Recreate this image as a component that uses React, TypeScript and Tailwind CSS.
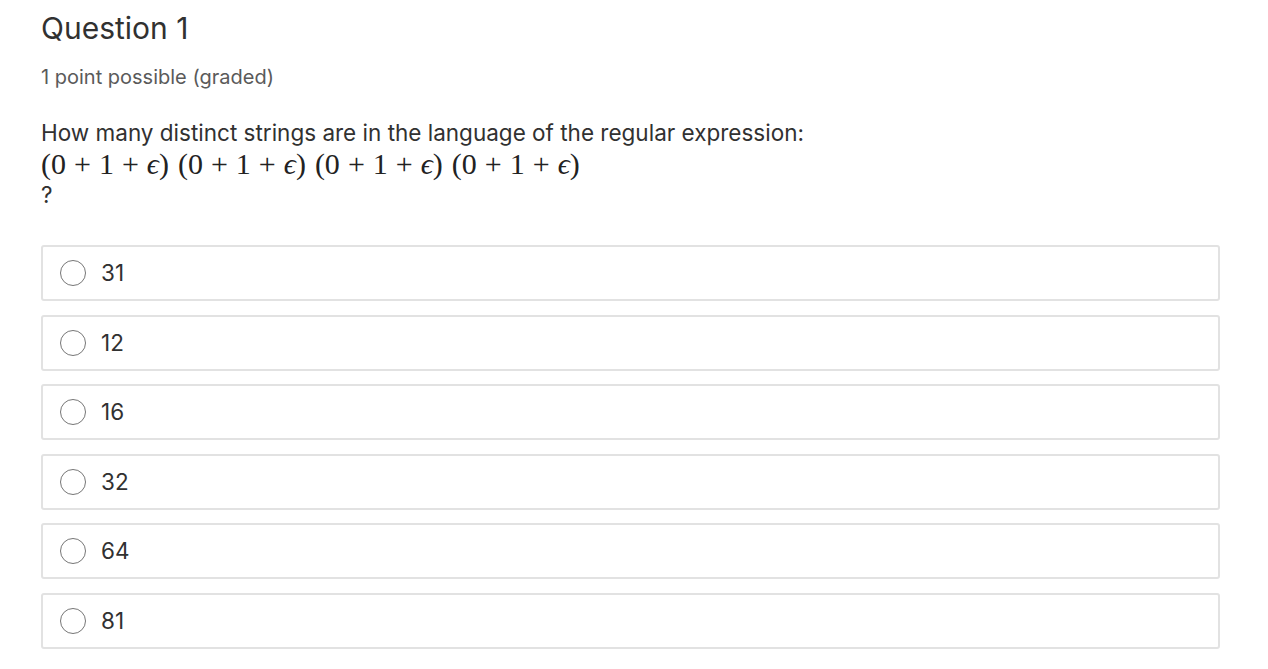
import React from 'react';

const options = ['31', '12', '16', '32', '64', '81'];

function MathGroup() {
  return (
    <span className="mr-[9px]">
      (0<span className="mx-[8px]">+</span>1<span className="mx-[8px]">+</span>
      <span className="italic">ϵ</span>)
    </span>
  );
}

export default function App() {
  return (
    <div className="min-h-screen bg-white px-[41px] pt-[10px] text-[#313131]" style={{ fontFamily: 'Inter, "Open Sans", sans-serif' }}>
      <h2 className="text-[30px] leading-[36px] text-[#313131]">Question 1</h2>
      <div className="mt-[18px] text-[20px] leading-[26px] text-[#5a5a5a]">1 point possible (graded)</div>
      <div className="mt-[29px] text-[22.5px] leading-[28px] text-[#313131]">
        How many distinct strings are in the language of the regular expression:
      </div>
      <div className="text-[30px] leading-[34px] text-[#222]" style={{ fontFamily: '"Liberation Serif", "DejaVu Serif", serif' }}>
        <MathGroup />
        <MathGroup />
        <MathGroup />
        <MathGroup />
      </div>
      <div className="text-[22.5px] leading-[28px]">?</div>

      <div className="mt-[36px] flex flex-col gap-[13.5px] pr-[7px]">
        {options.map(o => (
          <label key={o} className="flex h-[56px] items-center rounded-[3px] border-2 border-[#e2e2e2] pl-[17px]">
            <span className="h-[26px] w-[26px] rounded-full border border-[#767676]" />
            <span className="ml-[15px] text-[22.5px] text-[#313131]">{o}</span>
          </label>
        ))}
      </div>
    </div>
  );
}
